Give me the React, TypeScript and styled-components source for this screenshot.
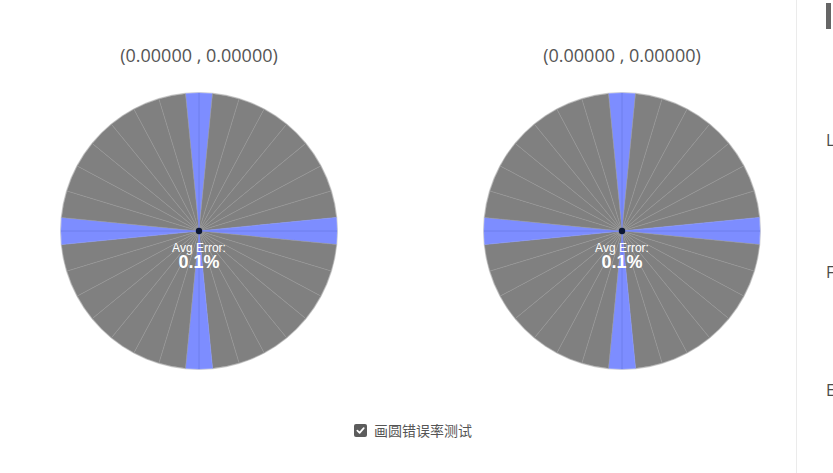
import React from 'react';
import styled, { createGlobalStyle } from 'styled-components';

const GlobalStyle = createGlobalStyle`
  html, body {
    margin: 0;
    padding: 0;
    background: #fff;
    overflow: hidden;
  }
  body {
    font-family: "Open Sans", "Noto Sans", sans-serif;
  }
`;

const SECTORS = 32;
const RADIUS = 138;
const SIZE = 280;
const C = SIZE / 2;
const BLUE_SECTORS = [0, 8, 16, 24];

const point = (deg: number, r: number) => {
  const rad = (deg * Math.PI) / 180;
  return [C + r * Math.sin(rad), C - r * Math.cos(rad)];
};

const sectorPath = (i: number) => {
  const step = 360 / SECTORS;
  const a0 = i * step - step / 2;
  const a1 = i * step + step / 2;
  const [x0, y0] = point(a0, RADIUS);
  const [x1, y1] = point(a1, RADIUS);
  return `M${C},${C} L${x0.toFixed(2)},${y0.toFixed(2)} A${RADIUS},${RADIUS} 0 0 1 ${x1.toFixed(2)},${y1.toFixed(2)} Z`;
};

const ErrorWheel: React.FC<{ error: string }> = ({ error }) => (
  <svg width={SIZE} height={SIZE} viewBox={`0 0 ${SIZE} ${SIZE}`}>
    <circle cx={C} cy={C} r={RADIUS + 0.5} fill="none" stroke="#d6d6d6" strokeWidth={1} />
    {Array.from({ length: SECTORS }, (_, i) => (
      <path
        key={i}
        d={sectorPath(i)}
        fill={BLUE_SECTORS.includes(i) ? '#7d8dff' : '#808080'}
        stroke={BLUE_SECTORS.includes(i) ? '#8494ff' : '#979797'}
        strokeWidth={0.5}
      />
    ))}
    <line x1={C} y1={C - RADIUS} x2={C} y2={C + RADIUS} stroke="#6f7fec" strokeWidth={1} />
    <line x1={C - RADIUS} y1={C} x2={C + RADIUS} y2={C} stroke="#6f7fec" strokeWidth={1} />
    <circle cx={C} cy={C} r={3.2} fill="#0b1633" />
    <text
      x={C}
      y={C + 21}
      textAnchor="middle"
      fill="#fff"
      fontFamily='"Liberation Sans", Arial, sans-serif'
      fontSize={12}
    >
      Avg Error:
    </text>
    <text
      x={C}
      y={C + 37}
      textAnchor="middle"
      fill="#fff"
      fontFamily='"Liberation Sans", Arial, sans-serif'
      fontSize={18}
      fontWeight="bold"
    >
      {error}
    </text>
  </svg>
);

const App: React.FC = () => {
  const charts = [
    { x: '0.00000', y: '0.00000', error: '0.1%' },
    { x: '0.00000', y: '0.00000', error: '0.1%' },
  ];

  return (
    <>
      <GlobalStyle />
      <Page>
        <Main>
          <ChartRow>
            {charts.map((c, i) => (
              <ChartBox key={i}>
                <Coords>
                  ({c.x} , {c.y})
                </Coords>
                <ErrorWheel error={c.error} />
              </ChartBox>
            ))}
          </ChartRow>
          <Footer>
            <CheckLabel>
              <CheckBox>
                <svg width="9" height="9" viewBox="0 0 10 10">
                  <path d="M1.5 5.2 L4 7.6 L8.6 2.4" fill="none" stroke="#fff" strokeWidth={1.9} strokeLinecap="round" strokeLinejoin="round" />
                </svg>
              </CheckBox>
              画圆错误率测试
            </CheckLabel>
          </Footer>
        </Main>
        <Side>
          <SideBar />
          <SideLabel $top={100}>L</SideLabel>
          <SideLabel $top={110}>F</SideLabel>
          <SideLabel $top={96}>E</SideLabel>
        </Side>
      </Page>
    </>
  );
};

const Page = styled.div`
  display: flex;
  width: 100vw;
  height: 100vh;
  overflow: hidden;
`;

const Main = styled.div`
  flex: 0 0 797px;
  display: flex;
  flex-direction: column;
  border-right: 1px solid #ebebeb;
  box-sizing: border-box;
  width: 797px;
`;

const ChartRow = styled.div`
  display: flex;
  gap: 123px;
  padding: 43px 0 0 49px;
`;

const ChartBox = styled.div`
  width: 300px;
  display: flex;
  flex-direction: column;
  align-items: center;
  gap: 24px;
`;

const Coords = styled.div`
  font-size: 18px;
  line-height: 24px;
  color: #555;
`;

const Footer = styled.div`
  display: flex;
  padding: 49px 0 0 354px;
`;

const CheckLabel = styled.label`
  display: flex;
  align-items: center;
  gap: 7px;
  font-family: "Noto Sans CJK SC", "Noto Sans", sans-serif;
  font-size: 14px;
  line-height: 20px;
  color: #555;
`;

const CheckBox = styled.span`
  width: 13px;
  height: 13px;
  border-radius: 2px;
  background: #5c5c5c;
  display: flex;
  align-items: center;
  justify-content: center;
`;

const Side = styled.div`
  flex: 0 0 36px;
  display: flex;
  flex-direction: column;
  align-items: flex-start;
  padding: 3px 0 0 29px;
  box-sizing: border-box;
`;

const SideBar = styled.div`
  width: 5px;
  height: 26px;
  background: #666;
`;

const SideLabel = styled.div<{ $top: number }>`
  margin-top: ${(p) => p.$top}px;
  font-size: 16px;
  line-height: 22px;
  color: #4a4a4a;
`;

export default App;
